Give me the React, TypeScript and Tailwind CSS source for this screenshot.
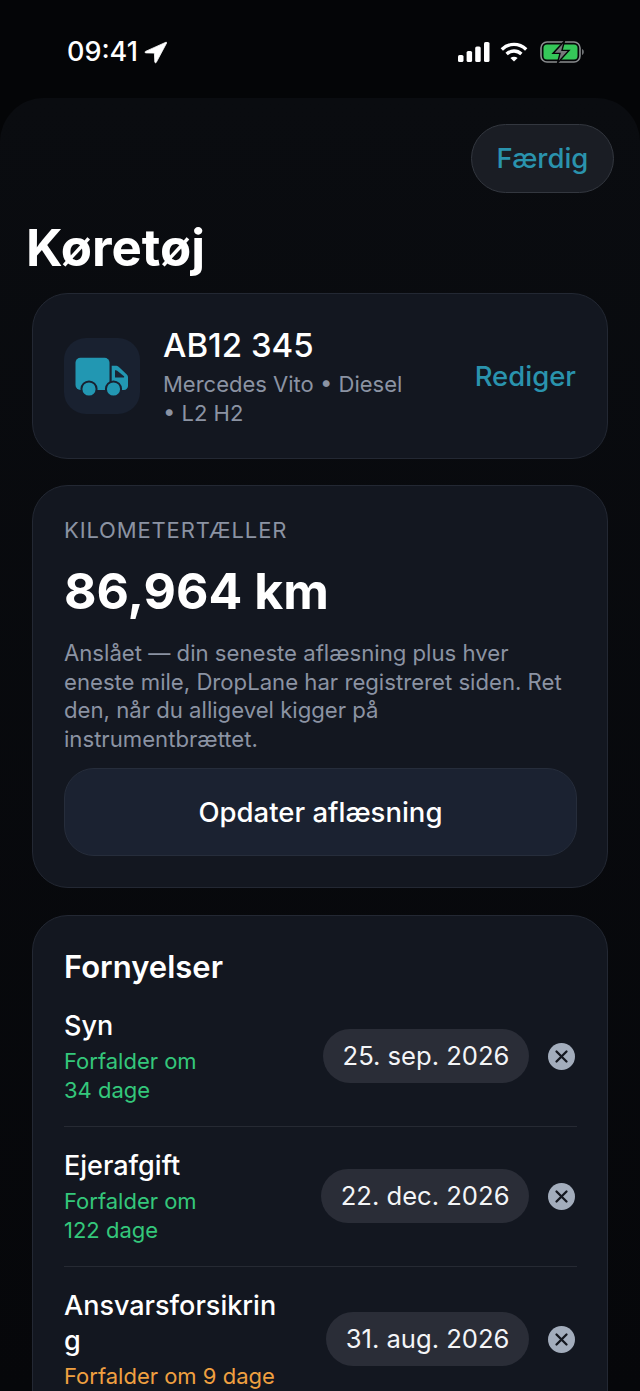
function StatusBar() {
  return (
    <div className="flex h-[98px] items-start justify-between pl-[67px] pr-[56px] pt-[36px]">
      <div className="flex items-center gap-[6px]">
        <span className="text-[27px] leading-[32px] font-medium text-white font-['Inter']">09:41</span>
        <svg width="23" height="23" viewBox="0 0 23 23" fill="white" stroke="white" strokeWidth="0.8">
          <path d="M22 1.2 1.5 10.4c-.8.4-.5 1.5.3 1.5l8.6.2.4 8.9c0 .9 1.2 1.1 1.5.3L22.6 2c.2-.6-.2-1-.6-.8Z" />
        </svg>
      </div>
      <div className="flex items-center pt-[5px]">
        <svg width="32" height="20" viewBox="0 0 32 20" fill="white">
          <rect x="0" y="13" width="5.5" height="7" rx="1.6" />
          <rect x="8.6" y="9" width="5.5" height="11" rx="1.6" />
          <rect x="17.2" y="4.5" width="5.5" height="15.5" rx="1.6" />
          <rect x="26" y="0" width="5.5" height="20" rx="1.6" />
        </svg>
        <svg width="28" height="20" viewBox="0 0 28 20" fill="none" stroke="white" strokeWidth="3.4" className="ml-[10px]">
          <path d="M1.8 7.4C9 .7 19 .7 26.2 7.4" />
          <path d="M6.6 12c4.4-4 10.4-4 14.800 0" />
          <path d="M14 19.6 10.4 16c2-1.7 5.2-1.7 7.2 0L14 19.6Z" fill="white" stroke="none" />
        </svg>
        <svg width="44" height="22" viewBox="0 0 44 22" className="ml-[12px]">
          <rect x="1" y="1" width="39" height="20" rx="6" fill="none" stroke="#8a8d8f" strokeWidth="1.6" />
          <rect x="3.5" y="3.5" width="34" height="15" rx="3.5" fill="#35c759" />
          <path d="M42 8v6c1.2-.4 1.8-1.6 1.8-3s-.6-2.6-1.8-3Z" fill="#6f7274" />
          <path d="M24.5 0 13 12.4h7L17.5 22 29 9.4h-7L24.5 0Z" fill="#77797b" stroke="#050608" strokeWidth="1.4" />
        </svg>
      </div>
    </div>
  );
}

function TruckIcon() {
  return (
    <svg width="54" height="42" viewBox="0 0 54 42">
      <rect x="0.5" y="2.7" width="34" height="32.3" rx="5" fill="#2297b2" />
      <path d="M36.7 10.700h3.800c1.300 0 2.500.5 3.400 1.400l7.900 7.300c.8.800 1.200 1.800 1.200 2.900V31c0 2.200-1.800 4-4 4H36.700V10.700Z" fill="#2297b2" />
      <path d="M40 15.200h.8c.5 0 1 .2 1.400.5l6.800 5.500c.5.500.2 1.300-.5 1.300H40v-7.300Z" fill="#1a2434" />
      <circle cx="14" cy="34" r="7.600" fill="#2297b2" stroke="#192130" strokeWidth="2" />
      <circle cx="38.500" cy="34" r="7.600" fill="#2297b2" stroke="#192130" strokeWidth="2" />
    </svg>
  );
}

function CloseIcon() {
  return (
    <svg width="15" height="15" viewBox="0 0 15 15" fill="none" stroke="#14171f" strokeWidth="2.3" strokeLinecap="round">
      <path d="M2.500 2.500 12.500 12.500M12.500 2.500 2.500 12.500" />
    </svg>
  );
}

function Renewal({
  name,
  status,
  color,
  date,
  border,
}: {
  name: string;
  status: string;
  color: string;
  date: string;
  border?: boolean;
}) {
  return (
    <div className={`flex items-center justify-between gap-3 pr-[2px] ${border ? "border-b border-[#262a33] pb-[21px]" : ""}`}>
      <div className="w-[216px]">
        <div className="text-[27px] leading-[35px] font-medium text-white break-all">{name}</div>
        <div className={`mt-[4px] whitespace-pre-line text-[22px] leading-[29px] ${color}`}>{status}</div>
      </div>
      <div className="flex items-center gap-[19px]">
        <div className="flex h-[54px] items-center rounded-full bg-[#2a2d37] px-[19.5px] pt-[1px] text-[25.6px] text-[#f4f5f7]">{date}</div>
        <div className="flex h-[27px] w-[27px] items-center justify-center rounded-full bg-[#a3adbc]">
          <CloseIcon />
        </div>
      </div>
    </div>
  );
}

export default function App() {
  return (
    <div className="h-[1391px] w-[640px] overflow-hidden bg-[#040507] font-['Inter',sans-serif]">
      <StatusBar />
      <div className="rounded-t-[44px] bg-gradient-to-b from-[#0a0c10] to-[#06070a] px-[32px] pt-[26px]">
        <div className="flex justify-end">
          <div className="mr-[-6px] flex h-[69px] w-[143px] items-center justify-center rounded-full border border-[#33373f] bg-[#1a1d24] pt-[1px] text-[27.5px] font-medium text-[#2a93ad]">
            Færdig
          </div>
        </div>
        <h1 className="ml-[-6px] mt-[24px] text-[51px] leading-[62px] font-bold text-white">Køretøj</h1>

        <div className="mt-[14px] flex h-[166px] items-center rounded-[36px] border border-[#232833] bg-[#131720] pl-[31px] pr-[31px]">
          <div className="flex h-[76px] w-[76px] items-center justify-center rounded-[22px] bg-[#192130]">
            <TruckIcon />
          </div>
          <div className="ml-[23px] w-[255px] pt-[2px]">
            <div className="text-[33px] leading-[38px] font-medium text-white">AB12 345</div>
            <div className="mt-[6px] text-[22px] leading-[29px] text-[#8b93a3]">Mercedes Vito • Diesel • L2 H2</div>
          </div>
          <div className="ml-auto pt-[2px] text-[27.5px] font-medium text-[#2a93ad]">Rediger</div>
        </div>

        <div className="mt-[26px] rounded-[36px] border border-[#232833] bg-[#131720] pb-[31px] pl-[31px] pr-[30px] pt-[30px]">
          <div className="text-[22px] leading-[29px] tracking-[0.85px] text-[#8b93a3]">KILOMETERTÆLLER</div>
          <div className="mt-[16px] text-[50px] leading-[60px] font-bold text-white">86,964 km</div>
          <p className="mt-[18px] pr-[1px] text-[22.15px] leading-[28.67px] text-[#8b93a3]">
            Anslået — din seneste aflæsning plus hver eneste mile, DropLane har registreret siden. Ret den, når du alligevel kigger på instrumentbrættet.
          </p>
          <div className="mt-[14px] flex h-[88px] items-center justify-center rounded-[30px] border border-[#262d3b] bg-[#1b2231] pt-[2px] text-[27.5px] font-medium text-white">
            Opdater aflæsning
          </div>
        </div>

        <div className="mt-[27px] rounded-t-[36px] border border-[#232833] bg-[#131720] pl-[31px] pr-[30px] pt-[31px]">
          <div className="text-[31px] leading-[40px] font-semibold text-white">Fornyelser</div>
          <div className="mt-[21px] flex flex-col gap-[21px]">
            <Renewal name="Syn" status={"Forfalder om\n34 dage"} color="text-[#34c77b]" date="25. sep. 2026" border />
            <Renewal name="Ejerafgift" status={"Forfalder om\n122 dage"} color="text-[#34c77b]" date="22. dec. 2026" border />
            <Renewal name="Ansvarsforsikring" status="Forfalder om 9 dage" color="text-[#f0a040]" date="31. aug. 2026" />
          </div>
        </div>
      </div>
    </div>
  );
}
